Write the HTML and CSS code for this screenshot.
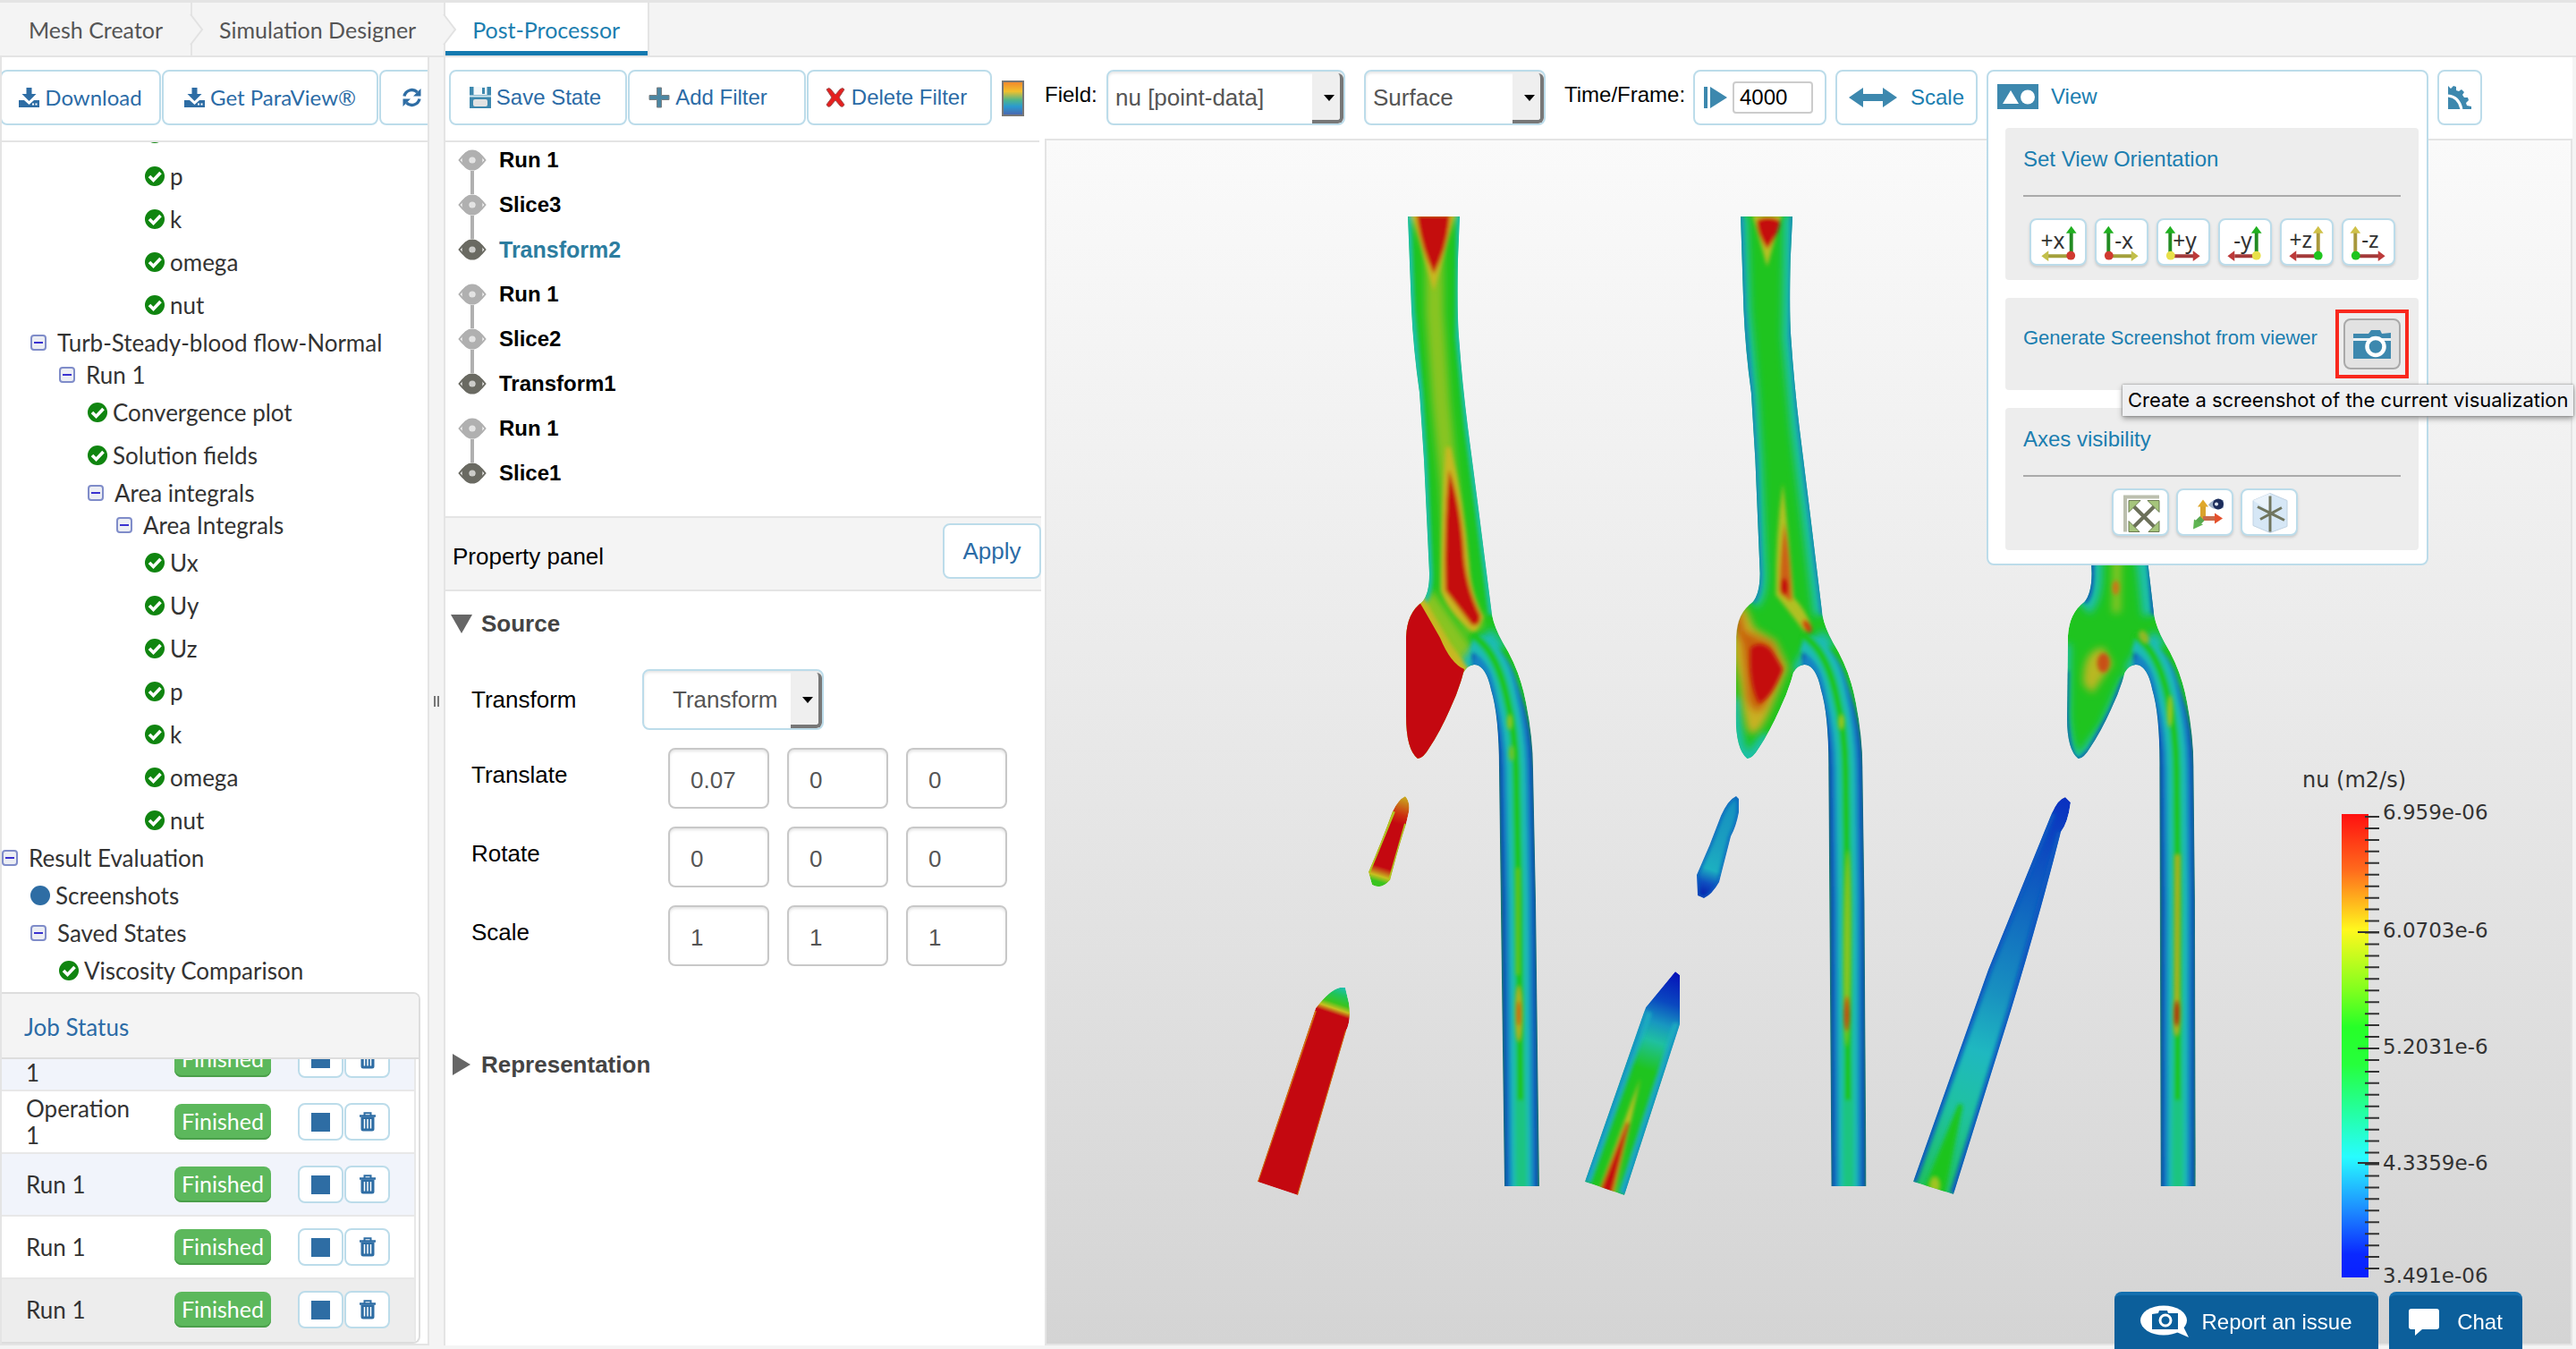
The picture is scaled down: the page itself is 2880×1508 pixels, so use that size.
FILE: index.html
```html
<!DOCTYPE html>
<html lang="en">
<head>
<meta charset="utf-8">
<title>Post-Processor</title>
<link rel="stylesheet" href="styles.css">
</head>
<body>
<svg class="sprite" aria-hidden="true">
  <symbol id="check" viewBox="0 0 22 22"><circle cx="11" cy="11" r="11" fill="#108510"/><path d="M5 11l4.500 4.500 8-8.500" fill="none" stroke="#fff" stroke-width="3.600"/></symbol>
  <symbol id="dot" viewBox="0 0 22 22"><circle cx="11" cy="11" r="11" fill="#2e6da4"/></symbol>
  <symbol id="minus" viewBox="0 0 18 18"><rect x="1" y="1" width="16" height="16" rx="3" fill="#eceef4" stroke="#7f8cc9" stroke-width="2"/><path d="M4 9h10" stroke="#3a32d0" stroke-width="2"/></symbol>
  <symbol id="download" viewBox="0 0 23 22"><path d="M8.500 0h6v7h5l-8 8-8-8h5z" fill="#2e6da4"/><path d="M0 14h6l5.500 5 5.500-5h6v8H0z" fill="#2e6da4"/><path d="M15 18.500h2M18.500 18.500h2" stroke="#fff" stroke-width="2"/></symbol>
  <symbol id="refresh" viewBox="0 0 22 22"><path d="M2.500 9.500A8.700 8.700 0 0 1 17 5M19.500 12.500A8.700 8.700 0 0 1 5 17" fill="none" stroke="#2e6da4" stroke-width="3.400"/><path d="M21 1v8.500h-8.500zM1 21v-8.500h8.500z" fill="#2e6da4"/></symbol>
  <symbol id="trash" viewBox="0 0 20 22"><path d="M1 4.500h18" stroke="#2e6da4" stroke-width="2.400"/><path d="M6.500 4V1.200h7V4" fill="none" stroke="#2e6da4" stroke-width="2"/><path d="M2.500 5.500h15V19q0 2.500-2.500 2.500H5Q2.500 21.500 2.500 19z" fill="#2e6da4"/><path d="M6.500 8v10.500M10 8v10.500M13.500 8v10.500" stroke="#fff" stroke-width="1.500"/></symbol>
  <symbol id="eye" viewBox="0 0 32 24"><path d="M1.500 12Q9 2 16 2t14.500 10Q23 22 16 22T1.500 12z" fill="#fff" stroke="currentColor" stroke-width="2"/><circle cx="16" cy="12" r="7.500" fill="#fff" stroke="currentColor" stroke-width="8"/><ellipse cx="16" cy="12" rx="3" ry="4" fill="currentColor" opacity=".35"/></symbol>
</svg>

<nav class="tabs">
  <a class="tab" href="#mesh">Mesh Creator<svg class="chevron" viewBox="0 0 16 36"><path d="M1 1l13 17L1 35" fill="#f4f4f4" stroke="#e2e2e2" stroke-width="2"/></svg></a>
  <a class="tab" href="#simulation">Simulation Designer<svg class="chevron" viewBox="0 0 16 36"><path d="M1 1l13 17L1 35" fill="#f4f4f4" stroke="#e2e2e2" stroke-width="2"/></svg></a>
  <a class="tab active" href="#post">Post-Processor</a>
</nav>

<div class="layout">
  <aside class="sidebar">
    <div class="side-tools">
      <button class="btn dl"><svg class="i23"><use href="#download"/></svg>Download</button>
      <button class="btn pv"><svg class="i23"><use href="#download"/></svg>Get ParaView®</button>
      <button class="btn rf" aria-label="Refresh"><svg class="i23"><use href="#refresh"/></svg></button>
    </div>
    <ul class="tree">
      <li class="leaf d5"><svg><use href="#check"/></svg>Uz</li>
      <li class="leaf d5"><svg><use href="#check"/></svg>p</li>
      <li class="leaf d5"><svg><use href="#check"/></svg>k</li>
      <li class="leaf d5"><svg><use href="#check"/></svg>omega</li>
      <li class="leaf d5"><svg><use href="#check"/></svg>nut</li>
      <li class="folder d1"><svg><use href="#minus"/></svg>Turb-Steady-blood flow-Normal</li>
      <li class="folder d2"><svg><use href="#minus"/></svg>Run 1</li>
      <li class="leaf d3"><svg><use href="#check"/></svg>Convergence plot</li>
      <li class="leaf d3"><svg><use href="#check"/></svg>Solution fields</li>
      <li class="folder d3"><svg><use href="#minus"/></svg>Area integrals</li>
      <li class="folder d4"><svg><use href="#minus"/></svg>Area Integrals</li>
      <li class="leaf d5"><svg><use href="#check"/></svg>Ux</li>
      <li class="leaf d5"><svg><use href="#check"/></svg>Uy</li>
      <li class="leaf d5"><svg><use href="#check"/></svg>Uz</li>
      <li class="leaf d5"><svg><use href="#check"/></svg>p</li>
      <li class="leaf d5"><svg><use href="#check"/></svg>k</li>
      <li class="leaf d5"><svg><use href="#check"/></svg>omega</li>
      <li class="leaf d5"><svg><use href="#check"/></svg>nut</li>
      <li class="folder d0"><svg><use href="#minus"/></svg>Result Evaluation</li>
      <li class="leaf d1"><svg><use href="#dot"/></svg>Screenshots</li>
      <li class="folder d1"><svg><use href="#minus"/></svg>Saved States</li>
      <li class="leaf d2"><svg><use href="#check"/></svg>Viscosity Comparison</li>
    </ul>
    <section class="jobs">
      <h2>Job Status</h2>
      <div class="jobs-scroll">
        <table>
          <tbody>
            <tr class="alt"><td>Operation 1</td><td><span class="badge">Finished</span></td><td><div class="acts"><button class="mini" aria-label="Stop"><span class="stop"></span></button><button class="mini" aria-label="Delete"><svg><use href="#trash"/></svg></button></div></td></tr>
            <tr><td>Operation 1</td><td><span class="badge">Finished</span></td><td><div class="acts"><button class="mini" aria-label="Stop"><span class="stop"></span></button><button class="mini" aria-label="Delete"><svg><use href="#trash"/></svg></button></div></td></tr>
            <tr class="alt"><td>Run 1</td><td><span class="badge">Finished</span></td><td><div class="acts"><button class="mini" aria-label="Stop"><span class="stop"></span></button><button class="mini" aria-label="Delete"><svg><use href="#trash"/></svg></button></div></td></tr>
            <tr><td>Run 1</td><td><span class="badge">Finished</span></td><td><div class="acts"><button class="mini" aria-label="Stop"><span class="stop"></span></button><button class="mini" aria-label="Delete"><svg><use href="#trash"/></svg></button></div></td></tr>
            <tr class="hover"><td>Run 1</td><td><span class="badge">Finished</span></td><td><div class="acts"><button class="mini" aria-label="Stop"><span class="stop"></span></button><button class="mini" aria-label="Delete"><svg><use href="#trash"/></svg></button></div></td></tr>
          </tbody>
        </table>
      </div>
    </section>
  </aside>
  <div class="splitter"><span></span></div>

  <main class="work">
    <div class="toolbar">
      <div class="group">
        <button class="btn save"><svg class="i24" viewBox="0 0 24 24"><path d="M0 0h24v24H0z" fill="#3d88ae"/><path d="M4.500 0h15v9h-15z" fill="#f4f8fa"/><path d="M14 1h3v7h-3z" fill="#3d88ae"/><path d="M0 10.500h24" stroke="#d6e8f0" stroke-width="2"/><rect x="4" y="14" width="16" height="8" rx="2" fill="#e2e2e2"/></svg>Save State</button>
        <button class="btn add"><svg class="i24" viewBox="0 0 24 24"><path d="M9.500 1h5v8.500H23v5h-8.500V23h-5v-8.500H1v-5h8.500z" fill="#4b86a2" stroke="#7a7f82"/></svg>Add Filter</button>
        <button class="btn del"><svg class="i24" viewBox="0 0 24 24"><path d="M2 3q3-3 5 0l5 6 5-6q3-3 5 0l-6 9 6 8q-2 4-5 1l-5-6-5 6q-3 3-5-1l6-8z" fill="#e5201f" stroke="#9d4a4a"/></svg>Delete Filter</button>
      </div>
      <span class="ramp" role="img" aria-label="Colour map"></span>
      <label class="lbl field" for="field">Field:</label>
      <span class="sel sel-field"><select id="field"><option>nu [point-data]</option></select></span>
      <span class="sel sel-surface"><select aria-label="Representation"><option>Surface</option></select></span>
      <label class="lbl time" for="frame">Time/Frame:</label>
      <div class="box"><svg class="play" viewBox="0 0 26 24"><path d="M0 0h4v24H0zM7 0l19 12L7 24z" fill="#3d88ae"/></svg><input id="frame" type="text" value="4000"></div>
      <button class="btn scale"><svg class="double" viewBox="0 0 54 22"><path d="M0 11L16 0v7h22V0l16 11-16 11v-7H16v7z" fill="#3d88ae"/></svg>Scale</button>
      <div class="view-slot">
        <section class="view">
          <header class="view-head"><svg class="shapes" viewBox="0 0 46 28"><path d="M0 0h46v28H0z" fill="#3d88ae"/><path d="M15 7l9 15H6z" fill="#fff"/><circle cx="34" cy="14.500" r="8" fill="#fff"/></svg>View</header>
          <div class="card orient">
            <h3>Set View Orientation</h3>
            <hr>
            <div class="row six">
              <button class="ib wide" aria-label="+x"><svg viewBox="0 0 60 50"><path d="M45 40V14" stroke="#228b22" stroke-width="4"/><path d="M45 7l6 8H39z" fill="#20b020"/><path d="M45 41H18" stroke="#a3a03c" stroke-width="4"/><path d="M11 41l8-6v12z" fill="#c2bf4a"/><circle cx="44.500" cy="40.500" r="5" fill="#d03a30"/><text x="10" y="33">+x</text></svg></button>
              <button class="ib" aria-label="-x"><svg viewBox="0 0 56 50"><path d="M13 40V14" stroke="#228b22" stroke-width="4"/><path d="M13 7l6 8H7z" fill="#20b020"/><path d="M13 41H40" stroke="#a3a03c" stroke-width="4"/><path d="M47 41l-8-6v12z" fill="#c2bf4a"/><circle cx="13.500" cy="40.500" r="5" fill="#d03a30"/><text x="20" y="33">-x</text></svg></button>
              <button class="ib" aria-label="+y"><svg viewBox="0 0 56 50"><path d="M13 40V14" stroke="#228b22" stroke-width="4"/><path d="M13 7l6 8H7z" fill="#20b020"/><path d="M13 41H40" stroke="#a33a3a" stroke-width="4"/><path d="M47 41l-8-6v12z" fill="#bd3a3a"/><circle cx="13.500" cy="40.500" r="5" fill="#e8e04a"/><text x="16" y="33">+y</text></svg></button>
              <button class="ib" aria-label="-y"><svg viewBox="0 0 56 50"><path d="M41 40V14" stroke="#228b22" stroke-width="4"/><path d="M41 7l6 8H35z" fill="#20b020"/><path d="M41 41H16" stroke="#a33a3a" stroke-width="4"/><path d="M8 41l8-6v12z" fill="#bd3a3a"/><circle cx="41" cy="40.500" r="5" fill="#e8e04a"/><text x="15" y="33">-y</text></svg></button>
              <button class="ib" aria-label="+z"><svg viewBox="0 0 56 50"><path d="M41 40V14" stroke="#a8983c" stroke-width="4"/><path d="M41 7l6 8H35z" fill="#cfc148"/><path d="M41 41H16" stroke="#a33a3a" stroke-width="4"/><path d="M8 41l8-6v12z" fill="#bd3a3a"/><circle cx="41" cy="40.500" r="5" fill="#1fc41f"/><text x="8" y="32">+z</text></svg></button>
              <button class="ib" aria-label="-z"><svg viewBox="0 0 56 50"><path d="M13 40V14" stroke="#a8983c" stroke-width="4"/><path d="M13 7l6 8H7z" fill="#cfc148"/><path d="M13 41H40" stroke="#a33a3a" stroke-width="4"/><path d="M47 41l-8-6v12z" fill="#bd3a3a"/><circle cx="13.500" cy="40.500" r="5" fill="#1fc41f"/><text x="20" y="32">-z</text></svg></button>
            </div>
          </div>
          <div class="card shot">
            <h3 class="small">Generate Screenshot from viewer</h3>
            <div class="mark"><button class="cam" aria-label="Create a screenshot"><svg viewBox="0 0 42 32"><path d="M0 4h17l3-4h10l2 4 10-1v29H0z" fill="#3d88ae"/><path d="M0 10.500h42" stroke="#e8f0f4" stroke-width="3"/><circle cx="25" cy="18.500" r="9.500" fill="#3d88ae" stroke="#fff" stroke-width="4.500"/></svg></button></div>
            <div class="tip" role="tooltip">Create a screenshot of the current visualization</div>
          </div>
          <div class="card axes">
            <h3>Axes visibility</h3>
            <hr>
            <div class="row three">
              <button class="ib wide" aria-label="Reset view"><svg viewBox="0 0 60 48"><path d="M13 46V7h38" fill="none" stroke="#bcbfae" stroke-width="4"/><path d="M22 17l24 24M46 17L22 41" stroke="#6c705a" stroke-width="4"/><path d="M17 11h13L17 24zM51 11v13L38 11zM17 46V34l12 12zM51 46V34L39 46z" fill="#a6c57c" stroke="#6b7a50"/></svg></button>
              <button class="ib wide" aria-label="Orientation axes"><svg viewBox="0 0 60 48"><path d="M28 33V17" stroke="#d9a32c" stroke-width="6"/><path d="M28 10l6 8H22z" fill="#e0a82c"/><path d="M28 31h14" stroke="#c96a48" stroke-width="5"/><path d="M50 31l-9-6v12z" fill="#e5502c"/><path d="M27 31l-6 6" stroke="#5aa850" stroke-width="7"/><path d="M17 43l1-11 10 6z" fill="#5fb552"/><path d="M34 16q8-10 17-5v8q-9 5-17-3z" fill="#9fb0c8"/><circle cx="45" cy="15" r="6" fill="#1c2d5c"/><circle cx="43" cy="15" r="2" fill="#dfe6f0"/></svg></button>
              <button class="ib wide" aria-label="Centre of rotation"><svg viewBox="0 0 60 48"><path d="M31 3l19 8v29l-19 7-19-8V11z" fill="#d6e7f6" stroke="#c0d2e2"/><path d="M31 3v20L12 11" fill="#eaf3fb"/><path d="M31 6v40M17 18l30 15M44 19L20 32" stroke="#70755f" stroke-width="3"/></svg></button>
            </div>
          </div>
        </section>
      </div>
      <button class="btn gear" aria-label="Settings"><svg viewBox="0 0 26 26"><path d="M0 0l3 3 3-3 3 1v4l3 1 3-2 3 3-2 3 2 3h4l1 3-3 3 1 3 5 1v3H0z" fill="#3d88ae"/><path d="M0 11q12 1 15 15" fill="none" stroke="#fff" stroke-width="3"/></svg></button>
    </div>

    <div class="panes">
      <div class="props">
        <ul class="pipeline">
          <li><svg><use href="#eye"/></svg>Run 1</li>
          <li class="joined"><svg><use href="#eye"/></svg>Slice3</li>
          <li class="joined on current"><svg><use href="#eye"/></svg>Transform2</li>
          <li><svg><use href="#eye"/></svg>Run 1</li>
          <li class="joined"><svg><use href="#eye"/></svg>Slice2</li>
          <li class="joined on"><svg><use href="#eye"/></svg>Transform1</li>
          <li><svg><use href="#eye"/></svg>Run 1</li>
          <li class="joined on"><svg><use href="#eye"/></svg>Slice1</li>
        </ul>
        <div class="prop-head"><span>Property panel</span><button class="btn apply">Apply</button></div>
        <h3 class="fold"><svg viewBox="0 0 24 22"><path d="M0 1h24L12 22z" fill="#666"/></svg>Source</h3>
        <form class="form">
          <div class="line"><label for="tf">Transform</label><span class="sel sel-tf"><select id="tf"><option>Transform</option></select></span></div>
          <div class="line three-in"><label for="tx">Translate</label><div class="ins"><input id="tx" value="0.07"><input aria-label="Translate y" value="0"><input aria-label="Translate z" value="0"></div></div>
          <div class="line three-in"><label for="rx">Rotate</label><div class="ins"><input id="rx" value="0"><input aria-label="Rotate y" value="0"><input aria-label="Rotate z" value="0"></div></div>
          <div class="line three-in"><label for="sx">Scale</label><div class="ins"><input id="sx" value="1"><input aria-label="Scale y" value="1"><input aria-label="Scale z" value="1"></div></div>
        </form>
        <h3 class="fold closed"><svg viewBox="0 0 24 24"><path d="M2 0l20 12L2 24z" fill="#666"/></svg>Representation</h3>
      </div>

      <div class="viewer">
        <svg class="scene" viewBox="1170 157 1704 1345" preserveAspectRatio="xMidYMin meet">
          <defs>
            <path id="body" d="M1574 242L1632 242L1630 290Q1629 350 1631 376Q1635 430 1641 477L1653 569L1668 687Q1671 702 1680 718Q1699 748 1706 785Q1714 825 1714 860L1717 1007L1719 1170L1721 1326L1682 1326L1678 1020L1676 860Q1676 800 1667 771Q1661 743 1648 743Q1640 744 1636 752Q1631 772 1621 793Q1610 818 1598 836Q1591 848 1585 848Q1572 838 1572 800L1572 712Q1573 685 1590 673Q1598 664 1598 641L1592 514L1587 439Q1580 390 1578 346Z"/>
            <path id="small-a" d="M1571 890Q1577 896 1575 908L1572 921Q1564 945 1554 984Q1544 995 1534 989L1530 975Q1545 940 1557 907Q1563 894 1571 890Z"/>
            <path id="small-b" d="M1941 890L1944 893V908Q1941 924 1935 935L1922 986Q1914 1000 1905 1004L1898 1001L1897 978Q1912 945 1924 912Q1932 894 1941 890Z"/>
            <path id="low-a" d="M1498 1104H1504L1508 1121Q1511 1140 1505 1152L1451 1336L1406 1321L1471 1127Q1486 1107 1498 1104Z"/>
            <path id="low-b" d="M1873 1086L1878 1090V1145L1816 1336L1772 1321L1840 1126Z"/>
            <path id="low-c" d="M2309 891L2315 897Q2312 920 2304 930Q2280 1025 2248 1130L2184 1335L2139 1321L2223 1084L2294 909Q2301 893 2309 891Z"/>
            <clipPath id="c-body"><use href="#body"/></clipPath>
            <clipPath id="c-sa"><use href="#small-a"/></clipPath>
            <clipPath id="c-sb"><use href="#small-b"/></clipPath>
            <clipPath id="c-la"><use href="#low-a"/></clipPath>
            <clipPath id="c-lb"><use href="#low-b"/></clipPath>
            <clipPath id="c-lc"><use href="#low-c"/></clipPath>
            <filter id="b2" filterUnits="userSpaceOnUse" x="1170" y="157" width="1706" height="1346"><feGaussianBlur stdDeviation="2"/></filter>
            <filter id="b4" filterUnits="userSpaceOnUse" x="1170" y="157" width="1706" height="1346"><feGaussianBlur stdDeviation="4"/></filter>
            <linearGradient id="legend" x1="0" y1="0" x2="0" y2="1">
              <stop offset="0" stop-color="#ff1010"/><stop offset=".12" stop-color="#ff6a1c"/><stop offset=".25" stop-color="#fff81e"/><stop offset=".38" stop-color="#80ff1e"/><stop offset=".46" stop-color="#26ff28"/><stop offset=".54" stop-color="#26ff3c"/><stop offset=".65" stop-color="#24ffa8"/><stop offset=".74" stop-color="#28fcff"/><stop offset=".86" stop-color="#1c86ff"/><stop offset=".95" stop-color="#0a28ff"/><stop offset="1" stop-color="#0a20ff"/>
            </linearGradient>
            <linearGradient id="g-lb" gradientUnits="userSpaceOnUse" x1="1873" y1="1086" x2="1794" y2="1328"><stop offset="0" stop-color="#0510b8"/><stop offset=".14" stop-color="#0a48c0"/><stop offset=".24" stop-color="#1898c0"/><stop offset=".32" stop-color="#1fc0a0"/><stop offset=".45" stop-color="#1fc41f"/><stop offset="1" stop-color="#1fc41f"/></linearGradient>
            <linearGradient id="g-lc" gradientUnits="userSpaceOnUse" x1="2309" y1="891" x2="2161" y2="1328"><stop offset="0" stop-color="#0a30c0"/><stop offset=".25" stop-color="#0f60c0"/><stop offset=".5" stop-color="#1890c0"/><stop offset=".65" stop-color="#1fb8c0"/><stop offset=".8" stop-color="#1fc2a0"/><stop offset="1" stop-color="#1fc060"/></linearGradient>
            <linearGradient id="g-la" gradientUnits="userSpaceOnUse" x1="1502" y1="1104" x2="1492" y2="1134"><stop offset="0" stop-color="#1fc0b0"/><stop offset=".3" stop-color="#1fc45a"/><stop offset=".6" stop-color="#3ac41f"/><stop offset=".8" stop-color="#c8c020"/><stop offset="1" stop-color="#c40810"/></linearGradient>
            <linearGradient id="g-sa" gradientUnits="userSpaceOnUse" x1="1571" y1="890" x2="1540" y2="992"><stop offset="0" stop-color="#c8b020"/><stop offset=".2" stop-color="#cc3010"/><stop offset=".3" stop-color="#c40810"/><stop offset=".78" stop-color="#c40810"/><stop offset=".88" stop-color="#c8c020"/><stop offset=".94" stop-color="#3ac41f"/></linearGradient>
            <linearGradient id="g-sb" gradientUnits="userSpaceOnUse" x1="1941" y1="890" x2="1902" y2="1004"><stop offset="0" stop-color="#1590c0"/><stop offset=".5" stop-color="#1ba0c0"/><stop offset=".72" stop-color="#1cb0c0"/><stop offset=".85" stop-color="#0f50c0"/><stop offset="1" stop-color="#0510a8"/></linearGradient>
            <g id="leg-colours" fill="none" filter="url(#b2)">
              <path d="M1646 738Q1667 738 1680 777Q1694 818 1695 860L1698 1007L1701 1330" stroke="#0a3cb4" stroke-width="40"/>
              <path d="M1650 729Q1675 735 1684 777Q1694 818 1695 860L1698 1007L1701 1330" stroke="#1484c2" stroke-width="31"/>
              <path d="M1646 718Q1675 725 1684 777Q1694 818 1695 860L1698 1007L1701 1330" stroke="#1cbcb4" stroke-width="21"/>
              <path d="M1646 710Q1672 725 1684 777Q1694 818 1695 860L1698 1007L1700 1240" stroke="#1fc41f" stroke-width="9"/>
              <path d="M1700 1230L1701 1330" stroke="#1fc480" stroke-width="12"/>
            </g>
          </defs>

          <!-- first vessel -->
          <g clip-path="url(#c-body)">
            <use href="#body" fill="#1fc41f"/>
            <g filter="url(#b4)" fill="none">
              <path d="M1603 240L1604 350L1611 450L1620 540L1627 650L1650 705" stroke="#88c424" stroke-width="20"/>
              <path d="M1588 670L1640 745" stroke="#88c424" stroke-width="34"/>
            </g>
            <g filter="url(#b2)" fill="none">
              <path d="M1574 240L1578 346L1587 439L1592 514L1598 641Q1598 668 1590 673" stroke="#1fc0a8" stroke-width="8"/>
              <path d="M1632 240L1631 376L1641 477L1653 569L1668 687" stroke="#1fc0a8" stroke-width="8"/>
              <path d="M1580 240L1625 240L1603 318Z" fill="#c8b820" stroke="#c8b820" stroke-width="4"/>
              <path d="M1584 240L1621 240Q1619 276 1603 306Q1588 276 1584 240Z" fill="#c40810"/>
              <path d="M1619 500Q1613 590 1613 660Q1622 685 1648 704L1656 690Q1642 665 1640 630Q1634 560 1619 500Z" fill="#c8b820" stroke="#c8b820" stroke-width="5"/>
              <path d="M1620 525Q1614 590 1616 660L1645 698Q1655 702 1655 688Q1638 655 1636 610Q1632 560 1620 525Z" fill="#c40810"/>
            </g>
            <path d="M1640 752Q1648 735 1675 712" stroke="#1fbcb0" stroke-width="24" fill="none" filter="url(#b4)"/>
            <use href="#leg-colours"/>
            <g filter="url(#b2)"><path d="M1570 665H1590L1622 720L1642 748L1620 860H1560Z" fill="#c8b820"/></g>
            <path d="M1568 680L1587 673Q1597 690 1610 713Q1622 742 1637 748L1620 860H1560Z" fill="#c40810"/>
            <g filter="url(#b2)"><path d="M1697 970V1090" stroke="#70c420" stroke-width="4"/><ellipse cx="1698" cy="1133" rx="4" ry="32" fill="#b8b020"/><ellipse cx="1698" cy="1133" rx="2" ry="14" fill="#d04810"/><ellipse cx="1690" cy="842" rx="3" ry="9" fill="#70c420"/><ellipse cx="1688" cy="807" rx="3" ry="9" fill="#90c420"/></g>
          </g>
          <g clip-path="url(#c-sa)"><use href="#small-a" fill="url(#g-sa)"/><path d="M1558 907L1530 975M1572 921L1554 984" stroke="#b0c420" stroke-width="4"/></g>
          <g clip-path="url(#c-la)"><use href="#low-a" fill="url(#g-la)"/><path d="M1471 1130L1406 1321M1505 1152L1451 1336" stroke="#d07010" stroke-width="2"/></g>

          <!-- second vessel -->
          <g clip-path="url(#c-body)" transform="matrix(1 0 -.006 1 373.500 0)">
            <use href="#body" fill="#1fc41f"/>
            <g filter="url(#b4)" fill="none">
              <path d="M1574 240L1578 346L1587 439L1592 514L1598 641Q1598 668 1590 673" stroke="#1fc0a8" stroke-width="16"/>
              <path d="M1632 240L1631 376L1641 477L1653 569L1668 687" stroke="#1fc0a8" stroke-width="20"/>
              <path d="M1572 780V800Q1574 848 1587 850L1608 822" stroke="#1fc0a8" stroke-width="14"/>
            </g>
            <g filter="url(#b2)" fill="none">
              <path d="M1574 240L1578 346L1587 439L1592 514L1598 641Q1598 668 1590 673" stroke="#1478b8" stroke-width="4"/>
              <path d="M1632 240L1631 376L1641 477L1653 569L1668 687" stroke="#1478b8" stroke-width="4"/>
            </g>
            <path d="M1644 752Q1650 735 1675 712" stroke="#1fbcb0" stroke-width="20" fill="none" filter="url(#b4)"/>
            <use href="#leg-colours"/>
            <g filter="url(#b2)">
              <path d="M1587 240H1620L1604 298Z" fill="#b8c020"/>
              <path d="M1592 246Q1604 240 1618 246Q1617 262 1604 278Q1592 262 1592 246Z" fill="#c40810"/>
              <path d="M1623 540Q1615 600 1616 665Q1632 685 1648 706L1656 700Q1648 680 1636 668Q1630 600 1623 540Z" fill="#b0c020"/>
              <path d="M1625 585Q1620 620 1620 660Q1628 672 1634 672Q1632 620 1625 585Z" fill="#cc6018"/>
              <ellipse cx="1625" cy="656" rx="5" ry="10" fill="#c40810"/>
              <ellipse cx="1651" cy="700" rx="4" ry="8" transform="rotate(-30 1651 700)" fill="#cc4010"/>
              <ellipse cx="1698" cy="1060" rx="4" ry="110" fill="#88c420"/><ellipse cx="1698" cy="1133" rx="3" ry="20" fill="#d04810"/><ellipse cx="1690" cy="807" rx="3" ry="9" fill="#a0c420"/>
            </g>
            <g filter="url(#b4)">
              <path d="M1568 680L1582 678L1592 702L1616 716L1630 746L1614 785Q1598 828 1586 818Q1580 800 1576 765L1568 730Z" fill="#c8b020"/>
              <path d="M1564 692L1576 680L1582 705L1612 718L1624 746L1604 790Q1592 804 1584 780L1578 720Z" fill="#c86010"/>
            </g>
            <g filter="url(#b2)"><path d="M1588 724Q1600 715 1612 728L1624 748Q1612 780 1598 786Q1586 765 1588 724Z" fill="#c40810"/></g>
          </g>
          <g clip-path="url(#c-sb)"><use href="#small-b" fill="url(#g-sb)"/><use href="#small-b" fill="none" stroke="#0f60c0" stroke-width="4" filter="url(#b2)"/></g>
          <g clip-path="url(#c-lb)">
            <use href="#low-b" fill="url(#g-lb)"/>
            <g filter="url(#b2)"><path d="M1840 1130L1772 1321M1878 1145L1816 1336" stroke="#1cb0c0" stroke-width="14"/><path d="M1840 1130L1772 1321M1878 1145L1816 1336" stroke="#1488c0" stroke-width="4"/>
            <path d="M1834 1205L1786 1335L1804 1338Z" fill="#c8c020"/><path d="M1820 1255L1789 1335L1800 1338Z" fill="#c40810" stroke="#c40810" stroke-width="3"/></g>
          </g>

          <!-- third vessel -->
          <g clip-path="url(#c-body)" transform="matrix(1 0 -.010 1 747 0)">
            <use href="#body" fill="#1fc41f"/>
            <g filter="url(#b4)" fill="none">
              <path d="M1598 600V641Q1598 668 1588 678" stroke="#1fc0a8" stroke-width="24"/>
              <path d="M1653 569L1668 687" stroke="#1fc0a8" stroke-width="26"/>
              <path d="M1570 720V800Q1574 848 1587 850L1614 812L1638 757" stroke="#1fc0a8" stroke-width="11"/>
              <path d="M1644 752Q1650 735 1675 712" stroke="#1fbcb0" stroke-width="18"/>
            </g>
            <g filter="url(#b2)" fill="none">
              <path d="M1598 600V641Q1598 668 1590 673M1660 600L1668 687" stroke="#0f50b4" stroke-width="5"/>
              <path d="M1571 750V800Q1574 848 1586 850L1598 838L1621 795L1636 757" stroke="#0f50b4" stroke-width="4"/>
            </g>
            <use href="#leg-colours"/>
            <g filter="url(#b4)"><path d="M1590 765Q1588 726 1612 724L1622 742L1600 775Z" fill="#b8b820"/><path d="M1626 600V685" stroke="#90c420" stroke-width="9"/></g>
            <g filter="url(#b2)">
              <ellipse cx="1612" cy="741" rx="7" ry="11" fill="#c85018"/>
              <ellipse cx="1625" cy="657" rx="4" ry="8" fill="#c87818"/>
              <ellipse cx="1657" cy="712" rx="5" ry="8" transform="rotate(-30 1657 712)" fill="#90b820"/>
              <ellipse cx="1687" cy="795" rx="3" ry="18" fill="#a0c420"/>
              <path d="M1697 955L1698 1115" stroke="#b0b020" stroke-width="6"/>
              <ellipse cx="1698" cy="1133" rx="4" ry="26" fill="#b8b020"/><ellipse cx="1698" cy="1133" rx="3" ry="15" fill="#b01010"/>
            </g>
          </g>
          <g clip-path="url(#c-lc)">
            <use href="#low-c" fill="url(#g-lc)"/>
            <g filter="url(#b2)"><path d="M2294 909L2223 1084L2139 1321M2304 930L2248 1130L2184 1335" fill="none" stroke="#0f58c0" stroke-width="8"/><path d="M2192 1235L2154 1328L2172 1333Z" fill="#1fc41f" stroke="#1fc41f" stroke-width="5"/><ellipse cx="2163" cy="1325" rx="5" ry="9" fill="#a0c420"/></g>
          </g>

          <!-- colour legend -->
          <g class="legend-text">
            <text class="legend-title" x="2574" y="880">nu (m2/s)</text>
            <rect x="2618" y="910" width="30" height="518" fill="url(#legend)"/>
            <path d="M2652 912V1420" stroke="#333" stroke-width="16" stroke-dasharray="2 10.950"/>
            <path d="M2636 1042h24M2636 1172h24M2636 1300h24" stroke="#333" stroke-width="2"/>
            <text x="2664" y="916">6.959e-06</text>
            <text x="2664" y="1048">6.0703e-6</text>
            <text x="2664" y="1178">5.2031e-6</text>
            <text x="2664" y="1308">4.3359e-6</text>
            <text x="2664" y="1434">3.491e-06</text>
          </g>
        </svg>
      </div>
    </div>
  </main>
</div>

<div class="dock">
  <button class="dock-btn report"><svg viewBox="0 0 54 38"><ellipse cx="26" cy="17" rx="26" ry="16.500" fill="#fff"/><path d="M38 29l16 7-6-12z" fill="#fff"/><path d="M13 10l7-1 1-3h9l1 3h11v18H13z" fill="#0c5f9b"/><circle cx="28" cy="17" r="6" fill="#0c5f9b" stroke="#fff" stroke-width="3"/></svg>Report an issue</button>
  <button class="dock-btn chat"><svg viewBox="0 0 34 30"><path d="M3 0h28q3 0 3 3v17q0 3-3 3H15l-8 7v-7H3q-3 0-3-3V3q0-3 3-3z" fill="#fff"/></svg>Chat</button>
</div>
</body>
</html>
```
FILE: styles.css
```css
* { box-sizing: border-box; }

body {
  margin: 0;
  height: 100vh;
  display: flex;
  flex-direction: column;
  overflow: hidden;
  background: #f4f4f4;
  color: #000;
  font: 24px/30px "Liberation Sans", Arial, sans-serif;
}

h2, h3 { margin: 0; font-weight: 400; }
ul { list-style: none; margin: 0; padding: 0; }
button, input, select { font: inherit; color: inherit; margin: 0; }
button { cursor: pointer; }
svg { flex: none; display: block; }
.sprite { position: absolute; width: 0; height: 0; }

/* tabs */
.tabs {
  flex: none;
  height: 64px;
  display: flex;
  padding-left: 2px;
  border-top: 3px solid #e4e4e4;
  border-bottom: 2px solid #e4e4e4;
  font: 25px/30px Lato, sans-serif;
}
.tab {
  position: relative;
  display: flex;
  align-items: center;
  padding: 0 31px 0 30px;
  color: #555;
  text-decoration: none;
  border-right: 2px solid #e4e4e4;
}
.tab.active { background: #fff; color: #1b7eb0; box-shadow: inset 0 -5px #147ab0; }
.chevron { position: absolute; right: -15px; top: 12px; width: 16px; height: 36px; z-index: 1; }

/* frame */
.layout { flex: 1; min-height: 0; display: flex; margin: 0 4px 4px 0; }

.btn {
  display: flex;
  align-items: center;
  justify-content: center;
  gap: 6px;
  height: 62px;
  padding: 0;
  background: #fff;
  border: 2px solid #bcdcea;
  border-radius: 8px;
  color: #2b6ba6;
  white-space: nowrap;
}
.i23 { width: 23px; height: 22px; }
.i24 { width: 24px; height: 24px; }

/* sidebar */
.sidebar {
  flex: none;
  width: 480px;
  display: flex;
  flex-direction: column;
  background: #fff;
  border: solid #e4e4e4;
  border-width: 0 2px 2px;
  font: 26px/30px Lato, sans-serif;
  color: #333;
}
.side-tools {
  flex: none;
  display: flex;
  gap: 1px;
  height: 95px;
  padding-top: 14px;
  overflow: hidden;
  border-bottom: 2px solid #e4e4e4;
  font-size: 24px;
}
.side-tools .btn { flex: none; }
.dl { width: 180px; margin-left: -2px; }
.pv { width: 242px; }
.rf { width: 72px; }

.tree {
  flex: 1;
  min-height: 0;
  overflow: hidden;
  display: flex;
  flex-direction: column;
  justify-content: flex-end;
}
.tree li { flex: none; display: flex; align-items: center; white-space: nowrap; }
.leaf { height: 48px; gap: 6px; }
.folder { height: 36px; gap: 12px; }
.leaf svg { width: 22px; height: 22px; }
.folder svg { width: 18px; height: 18px; }
.d1 { padding-left: 32px; }
.d2 { padding-left: 64px; }
.d3 { padding-left: 96px; }
.d4 { padding-left: 128px; }
.d5 { padding-left: 160px; }

.jobs {
  flex: none;
  margin-right: 8px;
  border: 2px solid #ddd;
  border-left: 0;
  border-radius: 0 8px 8px 0;
  overflow: hidden;
}
.jobs h2 {
  height: 73px;
  padding: 22px 25px;
  background: #f4f4f4;
  border-bottom: 2px solid #ddd;
  font-size: 26px;
  line-height: 30px;
  color: #2b6ba6;
}
.jobs-scroll {
  height: 316px;
  display: flex;
  align-items: flex-end;
  overflow: hidden;
  margin-right: 3px;
  border-right: 2px solid #e8e8e8;
}
table { width: 100%; border-collapse: collapse; table-layout: fixed; }
td { height: 70px; padding: 0; border-bottom: 2px solid #e8e8e8; vertical-align: middle; }
td:first-child { width: 193px; padding: 0 40px 0 27px; }
td:nth-child(2) { width: 138px; }
tr.alt td { background: #f1f4fb; }
tr.hover td { background: #ededed; border-color: #ededed; }
.badge {
  display: block;
  width: 108px;
  height: 40px;
  line-height: 38px;
  text-align: center;
  color: #fff;
  background: #5cb85c;
  border-radius: 8px;
  box-shadow: inset 0 -2px #4a9f4a;
  font-size: 25px;
}
.acts { display: flex; gap: 1px; }
.mini {
  display: flex;
  align-items: center;
  justify-content: center;
  width: 51px;
  height: 42px;
  padding: 0;
  background: #fff;
  border: 2px solid #bcdcea;
  border-radius: 8px;
}
.mini svg { width: 20px; height: 22px; }
.stop { width: 21px; height: 21px; background: #2e6da4; }

.splitter {
  flex: none;
  width: 16px;
  display: flex;
  align-items: center;
  justify-content: center;
  background: #f4f4f4;
}
.splitter span { width: 6px; height: 12px; border: solid #777; border-width: 0 2px; }

/* workspace */
.work {
  flex: 1;
  min-width: 0;
  display: flex;
  flex-direction: column;
  background: #fff;
  border-left: 2px solid #e4e4e4;
}
.toolbar {
  flex: none;
  display: flex;
  align-items: flex-start;
  gap: 10px;
  height: 91px;
  padding: 14px 0 0 4px;
}
.toolbar > * { flex: none; }
.group { display: flex; gap: 1px; margin-right: 1px; }
.save { width: 199px; padding-right: 6px; }
.add { width: 199px; padding-right: 20px; }
.del { width: 207px; padding-right: 8px; }
.ramp {
  width: 25px;
  height: 40px;
  margin-top: 12px;
  border: 2px solid #777;
  background: linear-gradient(#f28a2c, #f2c02c 28%, #4fb58a 55%, #2a9ad0 75%, #4a68b0);
}
.lbl { line-height: 56px; }
.field { width: 59px; margin-left: 13px; }
.time { width: 134px; margin-left: 11px; }

.sel {
  position: relative;
  display: block;
  height: 62px;
  color: #555;
  background: #fff;
  border: 2px solid #bcdcea;
  border-radius: 8px;
  overflow: hidden;
  box-shadow: inset 0 2px 3px #e6e6e6;
}
.sel select {
  appearance: none;
  width: 100%;
  height: 100%;
  padding: 0 40px 0 8px;
  border: 0;
  background: none;
  font-size: 26px;
}
.sel::before {
  content: "";
  position: absolute;
  right: 0;
  top: 2px;
  bottom: 0;
  width: 31px;
  background: #efefef;
  border: solid #777;
  border-width: 0 4px 4px 0;
  border-radius: 0 6px 6px 0;
  pointer-events: none;
}
.sel::after {
  content: "";
  position: absolute;
  right: 10px;
  top: 26px;
  border: solid transparent;
  border-width: 7px 6px 0;
  border-top-color: #000;
  pointer-events: none;
}
.sel-field { width: 267px; }
.sel-surface { width: 203px; margin-left: 11px; }

.box {
  display: flex;
  align-items: center;
  gap: 6px;
  width: 149px;
  height: 62px;
  padding-left: 10px;
  border: 2px solid #bcdcea;
  border-radius: 8px;
}
.play { width: 26px; height: 24px; }
.box input { width: 90px; height: 36px; padding: 0 6px; border: 2px solid #ccc; border-radius: 4px; }
.scale { width: 159px; gap: 15px; color: #1b7eb0; }
.double { width: 54px; height: 22px; }
.gear { width: 50px; }
.gear svg { width: 26px; height: 26px; }

/* view drop-down */
.view-slot { position: relative; width: 494px; height: 62px; }
.view {
  position: absolute;
  inset: 0 0 auto;
  z-index: 2;
  padding: 0 9px 15px;
  background: #fff;
  border: 2px solid #bcdcea;
  border-radius: 8px;
  color: #1b7eb0;
}
.view-head { display: flex; align-items: center; gap: 14px; height: 63px; padding: 0 0 7px 1px; }
.shapes { width: 46px; height: 28px; }
.card { margin: 0 0 20px 10px; padding: 0 20px; background: #ededed; border-radius: 4px; }
.card h3 { font-size: 24px; line-height: 30px; }
.card h3.small { font-size: 22px; padding-bottom: 14px; }
.card hr { height: 2px; margin: 0; border: 0; background: #aaa; }
.orient { height: 170px; padding-top: 20px; }
.orient hr, .axes hr { margin-top: 25px; }
.shot { position: relative; display: flex; align-items: center; justify-content: space-between; height: 103px; padding-right: 11px; }
.axes { height: 159px; margin-bottom: 0; padding-top: 20px; }
.row { display: flex; justify-content: center; }
.six { gap: 9px; padding-top: 24px; }
.three { gap: 8px; padding: 13px 16px 0 0; }
.ib {
  width: 60px;
  height: 53px;
  padding: 0;
  overflow: hidden;
  background: #fff;
  border: 2px solid #bcdcea;
  border-radius: 8px;
  box-shadow: 0 2px 3px #ccc;
}
.ib.wide { width: 64px; }
.ib svg { width: 100%; height: 100%; }
.ib text { font: 25px "Noto Sans", sans-serif; fill: #333; }
.mark { border: 4px solid #f9281d; padding: 6px 5px; }
.cam {
  display: flex;
  align-items: center;
  justify-content: center;
  width: 64px;
  height: 57px;
  padding: 0;
  background: #e2e2e2;
  border: 2px solid #a9a9a9;
  border-radius: 8px;
}
.cam svg { width: 42px; height: 32px; }
.tip {
  position: absolute;
  left: 131px;
  top: 97px;
  z-index: 3;
  padding: 0 6px;
  height: 35px;
  background: #eff0f2;
  box-shadow: 0 0 2px #777, 0 3px 6px #999;
  color: #000;
  font: 22px/34px Inter, sans-serif;
  white-space: nowrap;
}

/* property column */
.panes { flex: 1; min-height: 0; display: flex; }
.props { flex: none; width: 670px; padding-top: 2px; }
.pipeline { margin: 0 6px 0 0; height: 420px; border-top: 2px solid #e4e4e4; }
.pipeline li {
  position: relative;
  display: flex;
  align-items: center;
  gap: 14px;
  height: 50px;
  padding: 0 0 10px 14px;
  font-weight: 700;
  color: #000;
}
.pipeline svg { width: 32px; height: 24px; color: #b0b0b0; }
.pipeline .on svg { color: #6a6a62; }
.pipeline .current { color: #2c7d9f; font-size: 25px; }
.joined::before {
  content: "";
  position: absolute;
  left: 28px;
  top: -18px;
  width: 4px;
  height: 26px;
  background: #b0b0b0;
}
.prop-head {
  display: flex;
  justify-content: space-between;
  height: 84px;
  margin-right: 4px;
  padding: 6px 0 0 8px;
  background: #f4f4f4;
  border: solid #e4e4e4;
  border-width: 2px 0;
  font-size: 26px;
  line-height: 74px;
}
.apply { width: 110px; }
.fold {
  display: flex;
  align-items: center;
  gap: 10px;
  padding: 21px 0 0 6px;
  font-size: 26px;
  font-weight: 700;
  color: #444;
}
.fold svg { width: 24px; height: 24px; }
.form { padding: 36px 0 0 29px; font-size: 26px; }
.line { display: flex; align-items: center; }
.line label { width: 191px; }
.three-in { margin-top: 20px; }
.three-in label { width: 220px; padding-bottom: 8px; }
.sel-tf { width: 203px; height: 68px; }
.sel-tf select { padding-left: 32px; }
.sel-tf::after { top: 29px; }
.ins { display: flex; gap: 20px; }
.ins input {
  width: 113px;
  height: 68px;
  padding: 4px 0 0 23px;
  border: 2px solid #c8c8c8;
  border-radius: 8px;
  color: #555;
  box-shadow: inset 0 2px 3px #e6e6e6;
}
.closed { padding-top: 95px; }

.viewer {
  flex: 1;
  min-width: 0;
  border: 2px solid #e4e4e4;
  background: linear-gradient(#fafafa, #eaeaea 45%, #d4d4d4);
}
.scene { width: 100%; height: 100%; }
.legend-text { fill: #333; font: 23px "DejaVu Sans", sans-serif; }
.legend-title { font-size: 24px; }

/* support buttons */
.dock { position: fixed; right: 60px; bottom: 0; display: flex; gap: 12px; z-index: 5; }
.dock-btn {
  display: flex;
  align-items: center;
  justify-content: center;
  height: 64px;
  padding: 0;
  background: #0c5f9b;
  border: 0;
  border-top: 4px solid #146faf;
  border-radius: 8px 8px 0 0;
  color: #fff;
}
.report { width: 295px; gap: 14px; }
.report svg { width: 54px; height: 38px; }
.chat { width: 149px; gap: 20px; }
.chat svg { width: 34px; height: 30px; }
```
